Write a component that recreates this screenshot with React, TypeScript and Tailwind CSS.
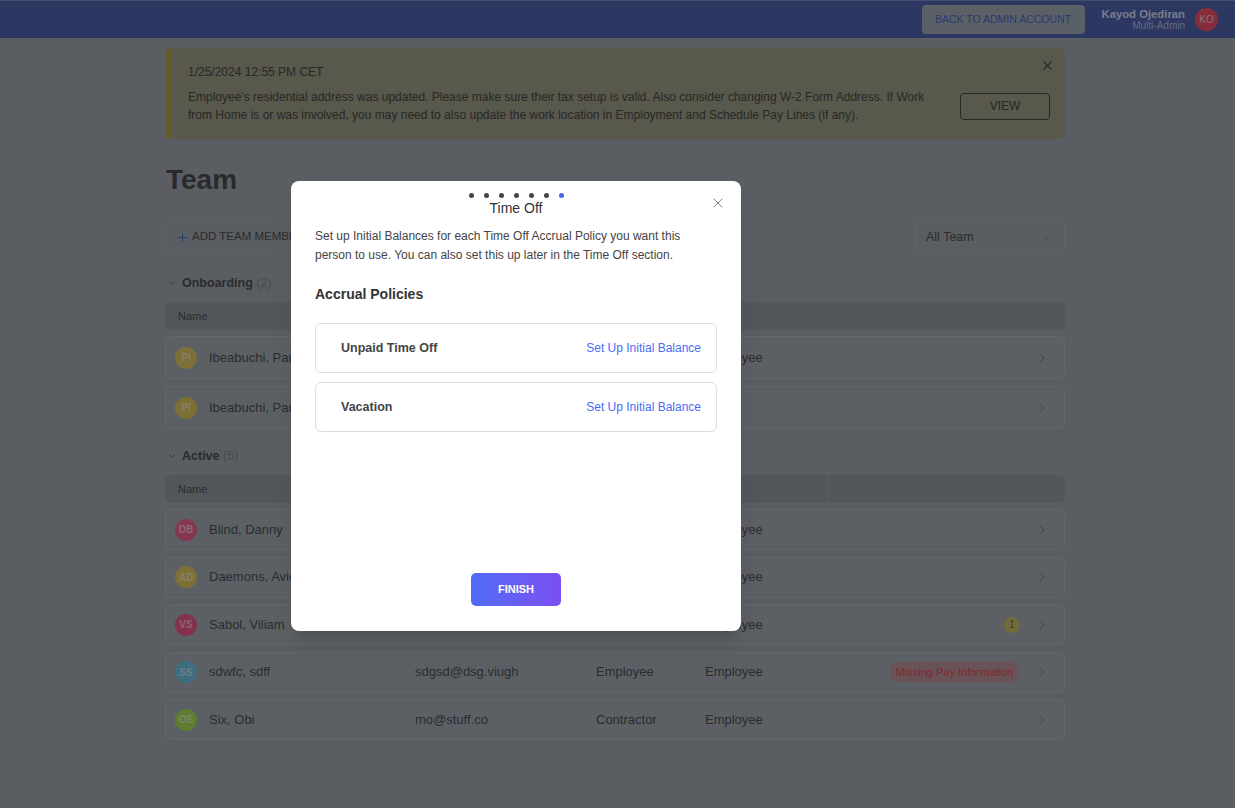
import { X, ChevronDown, ChevronRight, Plus } from "lucide-react";

type Member = {
  initials: string;
  name: string;
  email?: string;
  type?: string;
  access?: string;
  avatar: string;
  badge?: "count" | "pay";
};

const onboarding: Member[] = [
  { initials: "PI", name: "Ibeabuchi, Paul", access: "Employee", avatar: "bg-[#e3cc64]" },
  { initials: "PI", name: "Ibeabuchi, Paul", avatar: "bg-[#e3cc64]" },
];

const active: Member[] = [
  { initials: "DB", name: "Blind, Danny", email: "", type: "", access: "Employee", avatar: "bg-[#f56491]" },
  { initials: "AD", name: "Daemons, Avicci", access: "Employee", avatar: "bg-[#e3cc64]" },
  { initials: "VS", name: "Sabol, Viliam", access: "Employee", avatar: "bg-[#f05a8c]", badge: "count" },
  { initials: "SS", name: "sdwfc, sdff", email: "sdgsd@dsg.viugh", type: "Employee", access: "Employee", avatar: "bg-[#6dc8e3]", badge: "pay" },
  { initials: "OS", name: "Six, Obi", email: "mo@stuff.co", type: "Contractor", access: "Employee", avatar: "bg-[#ace35b]" },
];

const MemberRow = ({ m, tall }: { m: Member; tall?: boolean }) => (
  <div
    className={`grid grid-cols-[240px_181px_109px_1fr_auto] items-center rounded-md border border-[#b4bbc2] bg-[#a8b0b7] pl-[9px] pr-[14px] ${
      tall ? "h-[43px]" : "h-[41px]"
    }`}
  >
    <div className="flex items-center gap-3">
      <div className={`flex h-[22px] w-[22px] items-center justify-center rounded-full text-[10px] font-bold text-white/60 ${m.avatar}`}>
        {m.initials}
      </div>
      <span className="text-[13px]">{m.name}</span>
    </div>
    <span className="text-[13px]">{m.email}</span>
    <span className="text-[13px]">{m.type}</span>
    <span className="text-[13px]">{m.access}</span>
    <div className="flex items-center gap-[14px]">
      {m.badge === "count" && (
        <span className="flex h-4 w-4 items-center justify-center rounded-full bg-[#d1c464] text-[10px] text-[#7a7040]">1</span>
      )}
      {m.badge === "pay" && (
        <span className="rounded-full bg-[#c2979f] px-[7px] py-[3px] text-[11px] leading-[14px] text-[#e84a55]">
          Missing Pay Information
        </span>
      )}
      <ChevronRight size={16} strokeWidth={1.5} className="text-[#787e85]" />
    </div>
  </div>
);

const Section = ({ title, count, rows, tall, headers }: { title: string; count: number; rows: Member[]; tall?: boolean; headers: string[] }) => (
  <div>
    <div className="flex items-center gap-[5px] pl-[2px] leading-4">
      <ChevronDown size={10} strokeWidth={2} className="text-[#5a5f65]" />
      <span className="text-[12.5px] font-bold">
        {title} <span className="font-normal text-[#80868d]">({count})</span>
      </span>
    </div>
    <div className="mt-[11px] grid h-[28px] grid-cols-[237px_181px_109px_1fr] items-center rounded-md bg-[#969ea6] pl-[13px] text-[11px]">
      {headers.map((h, i) => (
        <span key={i} className={i === 3 && h ? "flex h-[28px] w-[123px] items-center border-r border-[#a3abb3]" : ""}>
          {h}
        </span>
      ))}
    </div>
    <div className={`mt-[6px] flex flex-col ${tall ? "gap-[7px]" : "gap-[6.5px]"}`}>
      {rows.map((m, i) => (
        <MemberRow key={i} m={m} tall={tall} />
      ))}
    </div>
  </div>
);

export default function App() {
  return (
    <div className="relative h-[808px] overflow-hidden bg-[#a4abb2] text-[#4c5055]" style={{ fontFamily: '"Liberation Sans", Arial, sans-serif' }}>
      {/* Top bar */}
      <div className="flex h-[38px] items-center justify-end border-t border-[#7d8ccc] bg-[#5064b2] pr-[17px]">
        <button className="h-[29px] w-[163px] rounded-[4px] bg-[#a7b0bb] text-[10.5px] text-[#4c69c8]">BACK TO ADMIN ACCOUNT</button>
        <div className="ml-[17px] flex flex-col items-end leading-[12px]">
          <span className="text-[11.3px] font-bold text-[#dae3ff]">Kayod Ojediran</span>
          <span className="text-[10px] text-[#b8c0ea]">Multi-Admin</span>
        </div>
        <div className="ml-[10px] flex h-[23px] w-[23px] items-center justify-center rounded-full bg-[#f5526e] text-[10px] text-[#f9c8d2]">
          KO
        </div>
      </div>

      <div className="ml-[165px] w-[900px] pb-16">
        {/* Alert */}
        <div className="relative mt-[10px] rounded-md border-l-[6px] border-[#b6a752] bg-[#a0a08a] pb-[15px] pl-[17px] pr-[15px] pt-[16px] text-[#4a4a46]">
          <X size={15} strokeWidth={1.8} className="absolute right-[10px] top-[10px]" />
          <div className="text-[12px] leading-4">1/25/2024 12:55 PM CET</div>
          <div className="mt-[8px] flex items-center gap-[30px]">
            <p className="flex-1 text-[12px] leading-[18px]">
              Employee's residential address was updated. Please make sure their tax setup is valid. Also consider changing W-2 Form Address. If Work
              from Home is or was involved, you may need to also update the work location in Employment and Schedule Pay Lines (if any).
            </p>
            <button className="h-[27px] w-[90px] rounded-[4px] border border-[#4a4a44] text-[12px]">VIEW</button>
          </div>
        </div>

        <h1 className="mt-[24px] pl-[1px] text-[28px] font-bold leading-[34px] text-[#4a4d52]">Team</h1>

        <div className="mt-[23px] flex h-[34px] items-center justify-between">
          <button className="flex h-[34px] w-[160px] items-center gap-[2px] rounded-md border border-[#acb4bd] pl-[9px] text-[11.5px]">
            <Plus size={15} strokeWidth={1.6} className="text-[#4c6dc8]" />
            ADD TEAM MEMBER
          </button>
          <div className="flex h-[34px] w-[150px] items-center justify-between rounded-md border border-[#acb4bd] pl-[10px] pr-[11px] pt-[1px] text-[12.5px]">
            All Team
            <ChevronDown size={13} strokeWidth={1.5} className="text-[#7f858c]" />
          </div>
        </div>

        <div className="mt-[21px]">
          <Section title="Onboarding" count={2} rows={onboarding} tall headers={["Name", "", "", ""]} />
        </div>
        <div className="mt-[19px]">
          <Section title="Active" count={5} rows={active} headers={["Name", "Email", "Type", "Access"]} />
        </div>
      </div>

      {/* Backdrop */}
      <div className="absolute left-0 top-0 z-10 h-full w-full bg-black opacity-45" />

      {/* Modal */}
      <div className="absolute left-[291px] top-[181px] z-20 flex h-[450px] w-[450px] flex-col rounded-lg bg-white px-[24px] shadow-xl">
        <X size={16} strokeWidth={1.4} className="absolute right-[15px] top-[14px] text-[#777]" />
        <div className="mt-[12px] flex justify-center gap-[10px]">
          {[0, 1, 2, 3, 4, 5, 6].map((i) => (
            <span key={i} className={`h-[5px] w-[5px] rounded-full ${i === 6 ? "bg-[#4a63e6]" : "bg-[#444]"}`} />
          ))}
        </div>
        <div className="mt-[2px] text-center text-[14px] leading-4 text-[#333]">Time Off</div>
        <p className="mt-[11px] text-[12px] leading-[19px] text-[#444]">
          Set up Initial Balances for each Time Off Accrual Policy you want this person to use. You can also set this up later in the Time Off section.
        </p>
        <div className="mt-[20px] text-[14px] font-bold leading-[18px] text-[#333]">Accrual Policies</div>
        <div className="mt-[20px] flex flex-col gap-[9px]">
          {["Unpaid Time Off", "Vacation"].map((p) => (
            <div key={p} className="flex h-[50px] items-center justify-between rounded-md border border-[#ddd] pl-[25px] pr-[15px]">
              <span className="text-[12.5px] font-bold text-[#444]">{p}</span>
              <span className="text-[12px] text-[#4a6cf7]">Set Up Initial Balance</span>
            </div>
          ))}
        </div>
        <div className="flex-1" />
        <div className="mb-[25px] flex justify-center">
          <button className="h-[33px] w-[90px] rounded-[5px] bg-gradient-to-r from-[#4f6bf6] to-[#7a4ff0] text-[11px] font-bold text-white">
            FINISH
          </button>
        </div>
      </div>
    </div>
  );
}
